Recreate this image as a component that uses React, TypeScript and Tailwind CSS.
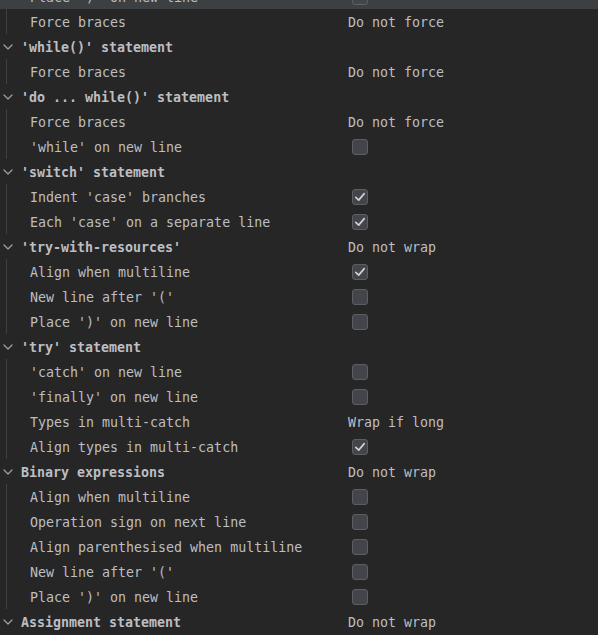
import React from "react";

type Child = { label: string; value?: string; check?: boolean };
type Group = { title: string; value?: string; children: Child[]; highlightFirst?: boolean; noHeader?: boolean };

const groups: Group[] = [
  {
    title: "",
    noHeader: true,
    highlightFirst: true,
    children: [
      { label: "Place ')' on new line", check: false },
      { label: "Force braces", value: "Do not force" },
    ],
  },
  { title: "'while()' statement", children: [{ label: "Force braces", value: "Do not force" }] },
  {
    title: "'do ... while()' statement",
    children: [
      { label: "Force braces", value: "Do not force" },
      { label: "'while' on new line", check: false },
    ],
  },
  {
    title: "'switch' statement",
    children: [
      { label: "Indent 'case' branches", check: true },
      { label: "Each 'case' on a separate line", check: true },
    ],
  },
  {
    title: "'try-with-resources'",
    value: "Do not wrap",
    children: [
      { label: "Align when multiline", check: true },
      { label: "New line after '('", check: false },
      { label: "Place ')' on new line", check: false },
    ],
  },
  {
    title: "'try' statement",
    children: [
      { label: "'catch' on new line", check: false },
      { label: "'finally' on new line", check: false },
      { label: "Types in multi-catch", value: "Wrap if long" },
      { label: "Align types in multi-catch", check: true },
    ],
  },
  {
    title: "Binary expressions",
    value: "Do not wrap",
    children: [
      { label: "Align when multiline", check: false },
      { label: "Operation sign on next line", check: false },
      { label: "Align parenthesised when multiline", check: false },
      { label: "New line after '('", check: false },
      { label: "Place ')' on new line", check: false },
    ],
  },
  { title: "Assignment statement", value: "Do not wrap", children: [] },
];

function Checkbox({ checked }: { checked: boolean }) {
  return (
    <div className="w-[16px] h-[16px] rounded-[3px] border border-[#5b5e63] bg-[#43454a] flex items-center justify-center">
      {checked && (
        <svg width="12" height="12" viewBox="0 0 12 12" fill="none">
          <path d="M1.8 6.4 L4.7 9.1 L10.2 2.6" stroke="#ced0d6" strokeWidth="1.7" strokeLinecap="round" strokeLinejoin="round" />
        </svg>
      )}
    </div>
  );
}

function Chevron() {
  return (
    <svg width="12" height="12" viewBox="0 0 12 12" fill="none" className="shrink-0">
      <path d="M2 4 L6 8 L10 4" stroke="#9ea1a6" strokeWidth="1.2" strokeLinecap="round" strokeLinejoin="round" />
    </svg>
  );
}

function Value({ child }: { child: { value?: string; check?: boolean } }) {
  if (child.value) return <span className="whitespace-pre pt-[2px]">{child.value}</span>;
  if (child.check !== undefined)
    return (
      <div className="pl-[4px]">
        <Checkbox checked={child.check} />
      </div>
    );
  return null;
}

export default function App() {
  return (
    <div
      className="w-[598px] h-[635px] overflow-hidden bg-[#262626] text-[#bcbec4] text-[13.3px]"
      style={{ fontFamily: '"DejaVu Sans Mono", "Liberation Mono", monospace' }}
    >
      <div className="mt-[-16px] flex flex-col">
        {groups.map((g, gi) => (
          <div key={gi} className="flex flex-col">
            {!g.noHeader && (
              <div className="h-[25px] flex items-center">
                <div className="w-[21px] pl-[2px] flex items-center">
                  <Chevron />
                </div>
                <span className="w-[327px] font-bold whitespace-pre pt-[2px]">{g.title}</span>
                <Value child={{ value: g.value }} />
              </div>
            )}
            {g.children.length > 0 && (
              <div className="flex flex-col relative">
                {g.children.map((c, ci) => (
                  <div
                    key={ci}
                    className={
                      "h-[25px] flex items-center " +
                      (g.highlightFirst && ci === 0 ? "bg-[#3d4043]" : "")
                    }
                  >
                    <div className="w-[30px] h-full flex">
                      <div className="ml-[6px] w-px h-full bg-[#3f4043]" />
                    </div>
                    <span className="w-[318px] whitespace-pre pt-[2px]">{c.label}</span>
                    <Value child={c} />
                  </div>
                ))}
              </div>
            )}
          </div>
        ))}
      </div>
    </div>
  );
}
